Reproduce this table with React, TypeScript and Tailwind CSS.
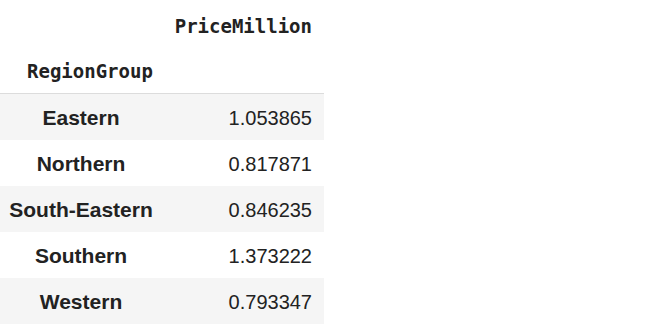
export default function App() {
  const rows: [string, string][] = [
    ["Eastern", "1.053865"],
    ["Northern", "0.817871"],
    ["South-Eastern", "0.846235"],
    ["Southern", "1.373222"],
    ["Western", "0.793347"],
  ];
  return (
    <div className="w-[657px] h-[331px] bg-white text-[#222]">
      <div className="w-[324px]">
        <div className="flex h-[47px] items-center justify-end pr-[12px] pt-[6px]">
          <span className="font-bold text-[19px]" style={{ fontFamily: '"DejaVu Sans Mono", monospace' }}>PriceMillion</span>
        </div>
        <div className="flex h-[47px] items-center pl-[27px] pt-[2px] border-b border-[#dcdcdc]">
          <span className="font-bold text-[19px]" style={{ fontFamily: '"DejaVu Sans Mono", monospace' }}>RegionGroup</span>
        </div>
        {rows.map(([k, v], i) => (
          <div
            key={k}
            className={`flex h-[46px] items-center pt-[2px] ${i % 2 === 0 ? "bg-[#f5f5f5]" : "bg-white"}`}
            style={{ fontFamily: '"Liberation Sans", Arial, sans-serif' }}
          >
            <div className="w-[162px] text-center font-bold text-[21px]">{k}</div>
            <div className="flex-1 text-right pr-[12px] text-[20px]">{v}</div>
          </div>
        ))}
      </div>
    </div>
  );
}
